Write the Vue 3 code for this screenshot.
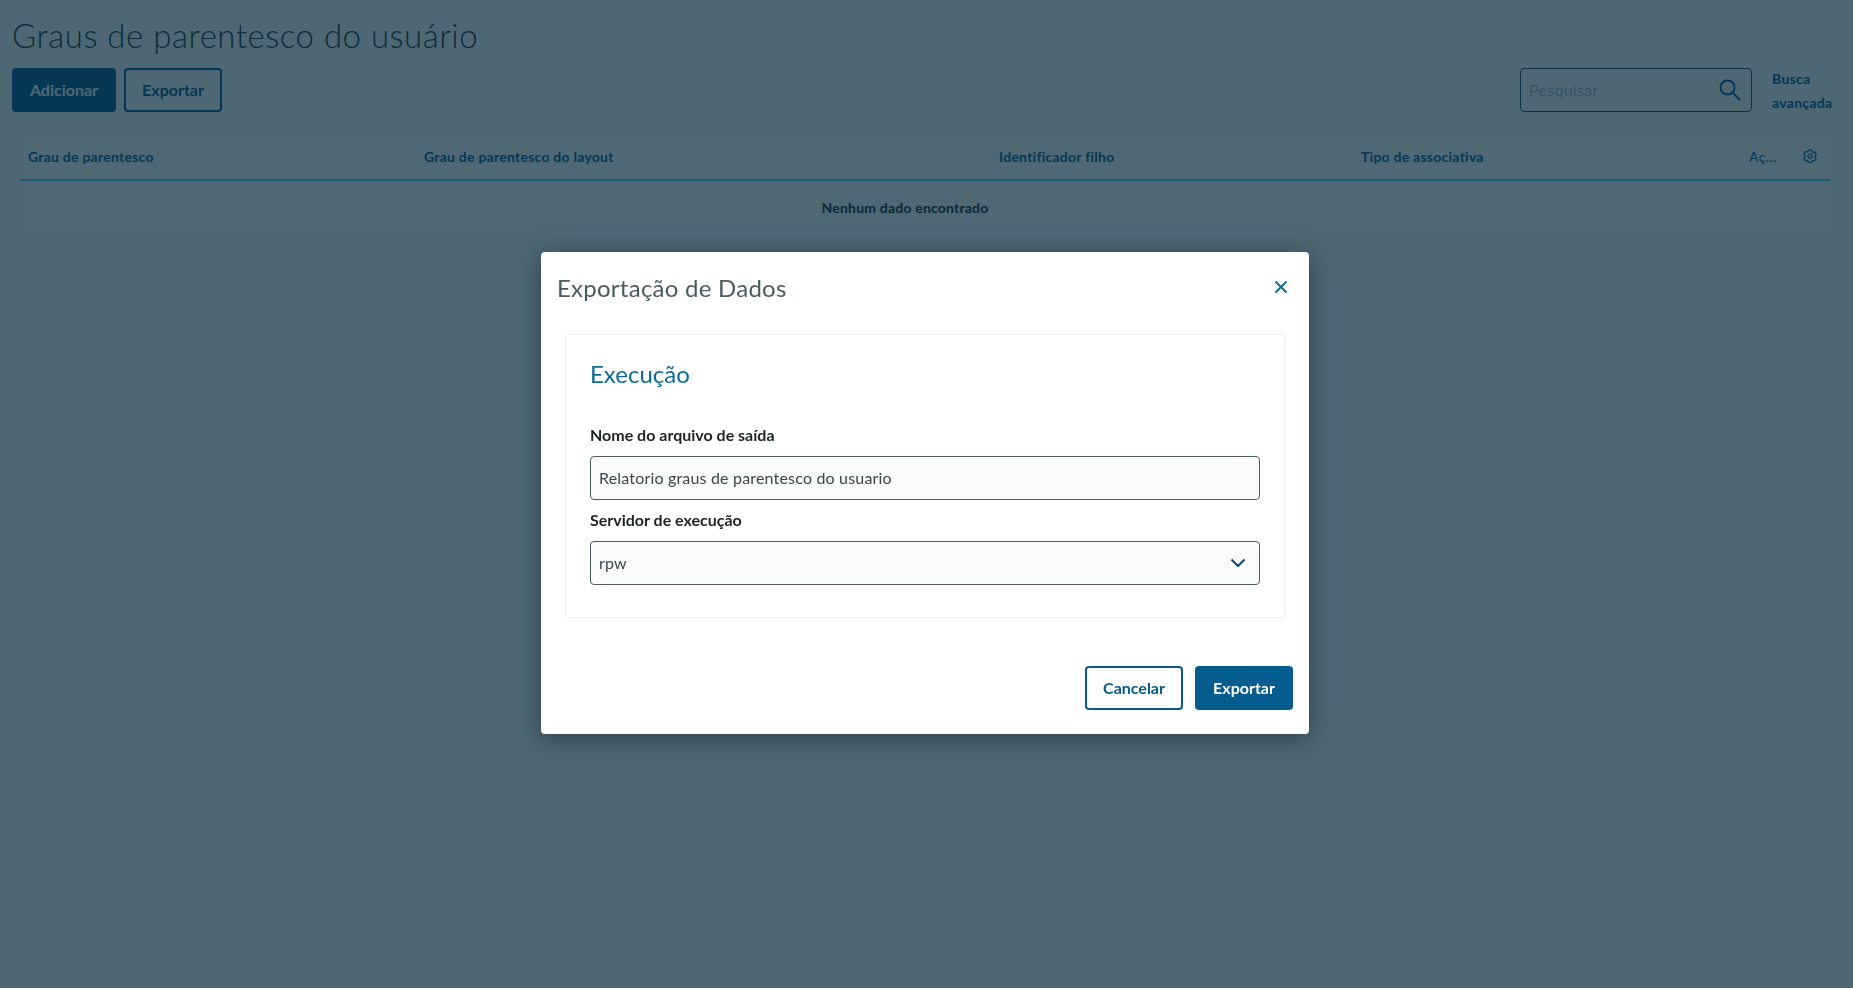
<template>
  <div class="page">
    <h1 class="page-title">Graus de parentesco do usuário</h1>

    <div class="page-actions">
      <div class="buttons">
        <button class="btn btn-primary">Adicionar</button>
        <button class="btn btn-default">Exportar</button>
      </div>
      <div class="search-area">
        <div class="search-box">
          <span class="search-placeholder">Pesquisar</span>
          <svg class="search-icon" viewBox="0 0 24 24" width="24" height="24">
            <circle cx="9.5" cy="9.5" r="7" />
            <path d="M14.6 14.6L22 22" />
          </svg>
        </div>
        <a class="advanced">Busca<br />avançada</a>
      </div>
    </div>

    <div class="table">
      <div class="table-head">
        <span v-for="col in columns" :key="col">{{ col }}</span>
        <span class="col-actions">Aç...</span>
        <svg class="gear" viewBox="0 0 16 16" width="14" height="14">
          <path d="M6.4 1.3h3.2l.7 1.9 1.2.7 2-.3 1.6 2.7-1.3 1.6v1.2l1.3 1.6-1.6 2.7-2-.3-1.2.7-.7 1.9H6.4l-.7-1.9-1.2-.7-2 .3-1.6-2.7 1.3-1.6V7.4L.9 5.8l1.6-2.7 2 .3 1.2-.7z" stroke-linejoin="round" />
          <circle cx="8" cy="8" r="2.3" />
        </svg>
      </div>
      <div class="table-empty">Nenhum dado encontrado</div>
    </div>

    <div class="overlay">
      <div class="modal">
        <div class="modal-header">
          <h2 class="modal-title">Exportação de Dados</h2>
          <svg class="close" viewBox="0 0 14 14" width="14" height="14">
            <path d="M1.5 1.5l11 11M12.5 1.5l-11 11" />
          </svg>
        </div>

        <div class="card">
          <h3 class="card-title">Execução</h3>
          <label class="field-label">Nome do arquivo de saída</label>
          <div class="field">Relatorio graus de parentesco do usuario</div>
          <label class="field-label second">Servidor de execução</label>
          <div class="field select">
            rpw
            <svg class="chevron" viewBox="0 0 16 10" width="16" height="10">
              <path d="M1.5 1.5L8 8l6.5-6.5" />
            </svg>
          </div>
        </div>

        <div class="modal-footer">
          <button class="btn btn-default light">Cancelar</button>
          <button class="btn btn-primary narrow">Exportar</button>
        </div>
      </div>
    </div>
  </div>
</template>

<script setup>
const columns = [
  'Grau de parentesco',
  'Grau de parentesco do layout',
  'Identificador filho',
  'Tipo de associativa'
]
</script>

<style>
html,
body {
  margin: 0;
  background: #fbfbfb;
}
</style>

<style scoped>
.page {
  height: 988px;
  padding: 14px 0 0 12px;
  box-sizing: border-box;
  font-family: Lato, "Noto Sans", sans-serif;
  overflow: hidden;
}

.page-title {
  margin: 0;
  font-size: 33px;
  font-weight: 300;
  line-height: 42px;
  letter-spacing: 0.5px;
  color: #2a3639;
}

.page-actions {
  display: flex;
  justify-content: space-between;
  margin-top: 12px;
  padding-right: 21px;
}

.buttons {
  display: flex;
  gap: 8px;
}

.btn {
  height: 44px;
  box-sizing: border-box;
  padding: 0 0 2px;
  border-radius: 4px;
  font-family: inherit;
  font-size: 16px;
  font-weight: 700;
}

.btn-primary {
  width: 104px;
  background: #055c8f;
  border: 0;
  color: #fff;
}

.btn-default {
  width: 98px;
  background: transparent;
  border: 2px solid #055c8f;
  color: #055c8f;
}

.narrow {
  width: 98px;
}

.search-area {
  display: flex;
  gap: 20px;
}

.search-box {
  width: 232px;
  height: 44px;
  box-sizing: border-box;
  padding: 0 9px 0 8px;
  display: flex;
  align-items: center;
  justify-content: space-between;
  border: 1px solid #2f464f;
  border-radius: 4px;
}

.search-placeholder {
  margin-top: -2px;
  font-size: 16px;
  letter-spacing: 0.3px;
  color: #b4bcc0;
}

.search-icon {
  fill: none;
  stroke: #055c8f;
  stroke-width: 2;
}

.advanced {
  width: 60px;
  margin-top: -1px;
  font-size: 14px;
  font-weight: 700;
  line-height: 24px;
  letter-spacing: 0.3px;
  color: #055c8f;
}

.table {
  margin: 18px 23px 0 8px;
  background: #fff;
}

.table-head {
  display: grid;
  grid-template-columns: 396px 575px 362px 388px 54px 1fr;
  align-items: center;
  height: 46px;
  padding-left: 8px;
  border-bottom: 2px solid #50d0ff;
  font-size: 14px;
  font-weight: 700;
  letter-spacing: 0.25px;
  color: #055c8f;
}

.col-actions {
  font-weight: 400;
  letter-spacing: 0.4px;
}

.gear {
  fill: none;
  stroke: #055c8f;
  stroke-width: 1.4;
}

.table-empty {
  height: 55px;
  box-sizing: border-box;
  padding: 0 40px 2px 0;
  display: flex;
  align-items: center;
  justify-content: center;
  font-size: 14px;
  font-weight: 700;
  letter-spacing: 0.2px;
  color: #1d2426;
}

.overlay {
  position: fixed;
  inset: 0;
  padding: 252px 0 0 541px;
  background: rgba(4, 40, 57, 0.7);
}

.modal {
  width: 768px;
  height: 482px;
  box-sizing: border-box;
  padding: 0 16px;
  background: #fff;
  border-radius: 4px;
  box-shadow: 0 4px 24px rgba(8, 30, 40, 0.5);
}

.modal-header {
  display: flex;
  align-items: center;
  justify-content: space-between;
  height: 74px;
  padding-right: 5px;
}

.modal-title {
  margin: -4px 0 0;
  font-size: 24px;
  font-weight: 400;
  letter-spacing: 0.25px;
  color: #4a5c60;
}

.close {
  fill: none;
  stroke: #0c6c94;
  stroke-width: 2;
  margin-top: -4px;
}

.card {
  height: 284px;
  box-sizing: border-box;
  margin: 8px 8px 0;
  padding: 22px 24px 0;
  border: 1px solid #eceeee;
  border-radius: 4px;
}

.card-title {
  margin: 0 0 32px;
  font-size: 24px;
  font-weight: 400;
  line-height: 34px;
  color: #0c6c94;
}

.field-label {
  display: block;
  font-size: 16px;
  font-weight: 700;
  line-height: 24px;
  color: #1d2426;
}

.field-label.second {
  margin-top: 8px;
}

.field {
  height: 44px;
  box-sizing: border-box;
  margin-top: 9px;
  padding: 0 8px 2px;
  display: flex;
  align-items: center;
  justify-content: space-between;
  border: 1px solid #4a5c60;
  border-radius: 4px;
  background: #fbfbfb;
  font-size: 16px;
  letter-spacing: 0.18px;
  color: #3a4649;
}

.chevron {
  fill: none;
  stroke: #0b4a70;
  stroke-width: 2;
  margin: 2px 5px 0 0;
}

.modal-footer {
  display: flex;
  justify-content: flex-end;
  gap: 12px;
  margin-top: 48px;
}

.light {
  background: #fff;
}
</style>
